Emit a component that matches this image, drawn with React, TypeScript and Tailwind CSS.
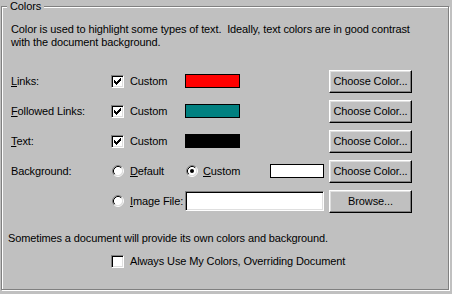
import { ReactNode } from "react"

const FONT = "font-['Liberation_Sans',Arial,sans-serif] text-[11px] leading-[13px] tracking-[-0.12px] text-black"

function Checkbox({ checked }: { checked?: boolean }) {
  return (
    <span className="box-border flex h-[13px] w-[13px] shrink-0 items-center justify-center border border-t-[#808080] border-l-[#808080] border-r-white border-b-white bg-white shadow-[inset_1px_1px_0_#000,inset_-1px_-1px_0_#dfdfdf]">
      {checked ? (
        <svg width="7" height="7" viewBox="0 0 7 7" shapeRendering="crispEdges">
          <path d="M6 0h1v3h-1v1h-1v1h-1v1h-1v1h-1v-1h-1v-1h-1v-3h1v1h1v1h1v-1h1v-1h1z" fill="#000" />
        </svg>
      ) : null}
    </span>
  )
}

function Radio({ checked }: { checked?: boolean }) {
  return (
    <svg width="12" height="12" viewBox="0 0 12 12" className="shrink-0">
      <circle cx="6" cy="6" r="4.5" fill="#fff" />
      <path d="M2.11 9.89A5.5 5.5 0 0 1 9.89 2.11" fill="none" stroke="#808080" />
      <path d="M9.89 2.11A5.5 5.5 0 0 1 2.11 9.89" fill="none" stroke="#fff" />
      <path d="M2.82 9.18A4.5 4.5 0 0 1 9.18 2.82" fill="none" stroke="#000" />
      <path d="M9.18 2.82A4.5 4.5 0 0 1 2.82 9.18" fill="none" stroke="#dfdfdf" />
      {checked ? <circle cx="6" cy="6" r="2" fill="#000" /> : null}
    </svg>
  )
}

function Win95Button({ children }: { children: ReactNode }) {
  return (
    <button
      type="button"
      className="box-border flex h-[23px] w-[83px] shrink-0 items-center justify-center border border-t-white border-l-white border-r-black border-b-black bg-[#c0c0c0] shadow-[inset_-1px_-1px_0_#808080,inset_1px_1px_0_#dfdfdf]"
    >
      {children}
    </button>
  )
}

function Swatch({ color, width }: { color: string; width: string }) {
  return <span className={`box-border block h-[14px] shrink-0 border border-black ${width} ${color}`} />
}

function ColorRow({ label, accel, color }: { label: string; accel: number; color: string }) {
  return (
    <div className="flex h-[30px] items-center">
      <span className="w-[100px] shrink-0">
        {label.slice(0, accel)}
        <u>{label[accel]}</u>
        {label.slice(accel + 1)}
      </span>
      <span className="flex w-[74px] shrink-0 items-center gap-[6px]">
        <Checkbox checked />
        <span>Custom</span>
      </span>
      <Swatch color={color} width="w-[55px]" />
      <span className="w-[89px] shrink-0" />
      <Win95Button>Choose Color...</Win95Button>
    </div>
  )
}

export default function App() {
  return (
    <div className={`h-[294px] w-[452px] overflow-hidden bg-[#c0c0c0] pl-[1px] pt-[6px] ${FONT}`}>
      <div className="relative box-border h-[284px] w-[448px] border border-[#808080] shadow-[inset_1px_1px_0_#fff,1px_1px_0_#fff]">
        <span className="absolute left-[5px] top-[-7px] bg-[#c0c0c0] px-[3px]">Colors</span>

        <div className="pl-[9px] pt-[16px]">
          <p className="whitespace-pre">
            {"Color is used to highlight some types of text.  Ideally, text colors are in good contrast\nwith the document background."}
          </p>

          <div className="mt-[17px]">
            <ColorRow label="Links:" accel={0} color="bg-[#ff0000]" />
            <ColorRow label="Followed Links:" accel={0} color="bg-[#008080]" />
            <ColorRow label="Text:" accel={0} color="bg-black" />

            <div className="flex h-[30px] items-center">
              <span className="w-[100px] shrink-0">Background:</span>
              <span className="flex w-[74px] shrink-0 items-center gap-[6px] pl-[1px]">
                <Radio />
                <span>
                  <u>D</u>efault
                </span>
              </span>
              <span className="flex w-[85px] shrink-0 items-center gap-[5px] pl-[1px]">
                <Radio checked />
                <span>
                  <u>C</u>ustom
                </span>
              </span>
              <Swatch color="bg-white" width="w-[54px]" />
              <span className="w-[5px] shrink-0" />
              <Win95Button>Choose Color...</Win95Button>
            </div>

            <div className="flex h-[30px] items-center">
              <span className="w-[100px] shrink-0" />
              <span className="flex w-[74px] shrink-0 items-center gap-[6px] pl-[1px]">
                <Radio />
                <span>
                  <u>I</u>mage File:
                </span>
              </span>
              <span className="box-border block h-[20px] w-[139px] shrink-0 border border-t-[#808080] border-l-[#808080] border-r-white border-b-white bg-white shadow-[inset_1px_1px_0_#000,inset_-1px_-1px_0_#dfdfdf]" />
              <span className="w-[5px] shrink-0" />
              <Win95Button>Browse...</Win95Button>
            </div>
          </div>

          <p className="-ml-[3px] mt-[16px]">Sometimes a document will provide its own colors and background.</p>

          <div className="mt-[8px] flex h-[16px] items-center gap-[6px] pl-[100px]">
            <Checkbox />
            <span>Always Use My Colors, Overriding Document</span>
          </div>
        </div>
      </div>
    </div>
  )
}
